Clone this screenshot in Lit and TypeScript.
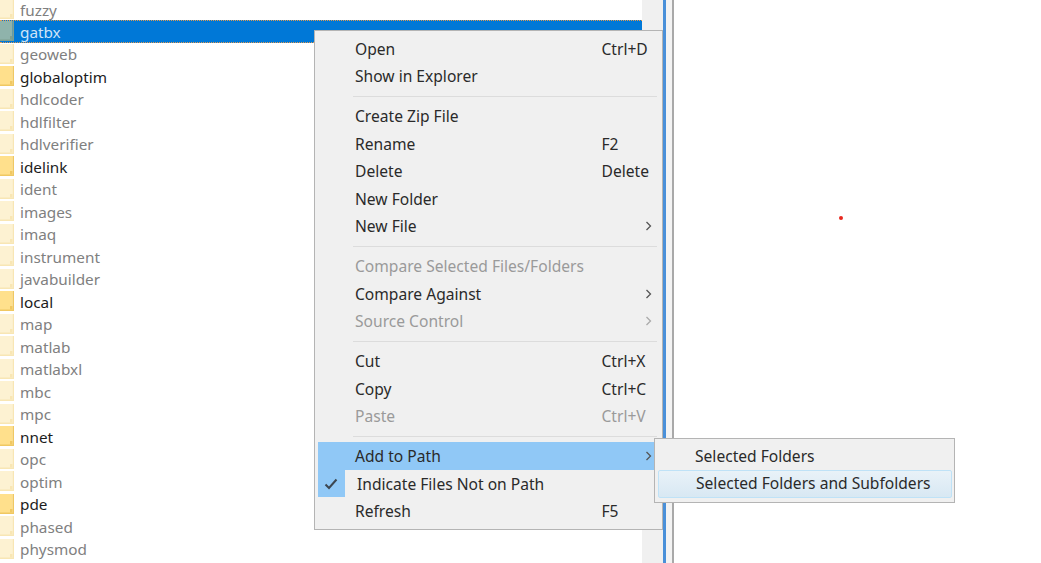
import { LitElement, html, css, svg } from "lit";
import { customElement } from "lit/decorators.js";

type Row = { name: string; on?: boolean; selected?: boolean };
type Item =
  | { sep: true }
  | { label: string; key?: string; arrow?: boolean; disabled?: boolean; active?: boolean; checked?: boolean };

const rows: Row[] = [
  { name: "fuzzy" }, { name: "gatbx", selected: true }, { name: "geoweb" }, { name: "globaloptim", on: true },
  { name: "hdlcoder" }, { name: "hdlfilter" }, { name: "hdlverifier" }, { name: "idelink", on: true },
  { name: "ident" }, { name: "images" }, { name: "imaq" }, { name: "instrument" }, { name: "javabuilder" },
  { name: "local", on: true }, { name: "map" }, { name: "matlab" }, { name: "matlabxl" }, { name: "mbc" },
  { name: "mpc" }, { name: "nnet", on: true }, { name: "opc" }, { name: "optim" }, { name: "pde", on: true },
  { name: "phased" }, { name: "physmod" },
];

const items: Item[] = [
  { label: "Open", key: "Ctrl+D" }, { label: "Show in Explorer" }, { sep: true },
  { label: "Create Zip File" }, { label: "Rename", key: "F2" }, { label: "Delete", key: "Delete" },
  { label: "New Folder" }, { label: "New File", arrow: true }, { sep: true },
  { label: "Compare Selected Files/Folders", disabled: true }, { label: "Compare Against", arrow: true },
  { label: "Source Control", arrow: true, disabled: true }, { sep: true },
  { label: "Cut", key: "Ctrl+X" }, { label: "Copy", key: "Ctrl+C" }, { label: "Paste", key: "Ctrl+V", disabled: true }, { sep: true },
  { label: "Add to Path", arrow: true, active: true }, { label: "Indicate Files Not on Path", checked: true },
  { label: "Refresh", key: "F5" },
];

const folder = (r: Row) => {
  const body = r.selected ? "#8fb3ab" : r.on ? "#ffe08c" : "#fdf2d2";
  const edge = r.selected ? "#7f9f8f" : r.on ? "#f0c862" : "#f8e6b4";
  return svg`<svg class="folder" width="14" height="20" viewBox="0 0 14 20">
    <path d="M0 0H12.5V20H0Z" fill="${body}"/>
    <path d="M12.5 0H14V20H0V18.5H12.5Z" fill="${edge}"/>
    <path d="M10 15H12.5V18.5H10Z" fill="${edge}"/>
  </svg>`;
};

const chevron = svg`<svg width="7" height="10" viewBox="0 0 7 10"><path d="M1.5 1 5.5 5 1.5 9" fill="none" stroke="currentColor" stroke-width="1.3"/></svg>`;
const check = svg`<svg width="14" height="12" viewBox="0 0 14 12"><path d="M1.5 6.5 5 10 12.5 1.5" fill="none" stroke="#3c4650" stroke-width="2"/></svg>`;

@customElement("app-root")
export class AppRoot extends LitElement {
  static styles = css`
    :host {
      display: block;
      position: relative;
      width: 1041px;
      height: 563px;
      overflow: hidden;
      background: #fff;
      font-family: "Noto Sans", "Open Sans", sans-serif;
      font-size: 15.6px;
      color: #2a2a2a;
    }
    .page { display: flex; height: 100%; }
    .list { width: 641.5px; flex: none; font-size: 15.3px; line-height: 18px; }
    .row {
      height: 22.5px;
      box-sizing: border-box;
      display: flex;
      align-items: center;
      gap: 6px;
      color: #808080;
      white-space: nowrap;
    }
    .row span { padding-top: 1px; }
    .row:first-child { height: 20px; align-items: flex-end; padding-bottom: 1px; }
    .row:first-child .folder { align-self: flex-start; margin-top: -1.25px; }
    .row.on { color: #1c1c1c; }
    .row.sel {
      background: #0078d7;
      color: #cfe4f7;
      border-top: 1px dotted #e39a4e;
      border-bottom: 1px dotted #e39a4e;
    }
    .folder { flex: none; }
    .scroll { width: 21.5px; background: #f0f0f0; flex: none; }
    .blue { width: 3px; background: #4a90d9; flex: none; }
    .gutter { width: 6px; background: #f3f3f3; flex: none; }
    .line { width: 2px; background: #a9a9a9; flex: none; }
    .right { flex: 1; }

    .dot {
      position: absolute;
      left: 839px;
      top: 216px;
      width: 4px;
      height: 4px;
      background: #e8281e;
      border-radius: 2px;
    }

    .menu {
      position: absolute;
      box-sizing: border-box;
      background: #f0f0f0;
      border: 1.5px solid #b4b4b4;
    }
    .main { left: 314px; top: 30px; width: 349px; padding: 3.75px 2.5px; }
    .sub { left: 654px; top: 438px; width: 301px; padding: 3.75px 2.5px; }
    .item {
      height: 27.5px;
      display: flex;
      align-items: center;
      position: relative;
      padding-left: 37.5px;
      white-space: nowrap;
      line-height: 20px;
    }
    .item .lbl { flex: 1; }
    .item .key { position: absolute; left: 284px; }
    .item .arrow { position: absolute; left: 327px; top: 9px; display: flex; color: #555; }
    .item.off { color: #9a9a9a; }
    .item.off .arrow { color: #aaa; }
    .item.act { background: #90c8f6; margin-right: -7px; }
    .item.chk .lbl { margin-left: 2px; }
    .box {
      position: absolute;
      left: 0;
      top: 0;
      width: 27px;
      height: 27.5px;
      background: #90c8f6;
      display: flex;
      align-items: center;
      justify-content: center;
    }
    .sep { height: 12.5px; display: flex; align-items: center; padding-left: 35px; margin-right: 3px; }
    .sep::after { content: ""; flex: 1; height: 1px; background: #dcdcdc; }
    .sub .item { padding-left: 37.5px; padding-bottom: 2px; box-sizing: border-box; }
    .sub .item.hot {
      border: 1px solid #bfe2f7;
      border-radius: 2px;
      background: linear-gradient(#e9f2f8, #d8e8f3);
    }
  `;

  private renderItem(i: Item) {
    if ("sep" in i) return html`<div class="sep"></div>`;
    const cls = ["item", i.disabled ? "off" : "", i.active ? "act" : "", i.checked ? "chk" : ""].join(" ");
    return html`<div class=${cls}>
      ${i.checked ? html`<span class="box">${check}</span>` : ""}
      <span class="lbl">${i.label}</span>
      ${i.key ? html`<span class="key">${i.key}</span>` : ""}
      ${i.arrow ? html`<span class="arrow">${chevron}</span>` : ""}
    </div>`;
  }

  render() {
    return html`
      <div class="page">
        <div class="list">
          ${rows.map(
            (r) => html`<div class="row ${r.on ? "on" : ""} ${r.selected ? "sel" : ""}">${folder(r)}<span>${r.name}</span></div>`
          )}
        </div>
        <div class="scroll"></div>
        <div class="blue"></div>
        <div class="gutter"></div>
        <div class="line"></div>
        <div class="right"></div>
      </div>
      <div class="dot"></div>
      <div class="menu main">${items.map((i) => this.renderItem(i))}</div>
      <div class="menu sub">
        <div class="item"><span class="lbl">Selected Folders</span></div>
        <div class="item hot"><span class="lbl">Selected Folders and Subfolders</span></div>
      </div>
    `;
  }
}
